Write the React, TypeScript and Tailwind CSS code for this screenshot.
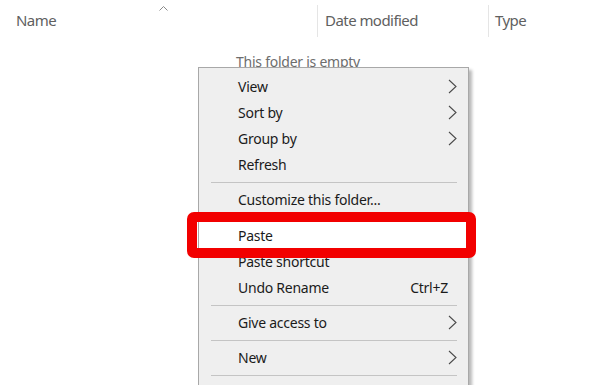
import React from 'react';

type MenuEntry =
  | { kind: 'item'; label: string; sub?: boolean; shortcut?: string; active?: boolean }
  | { kind: 'sep' };

const MENU: MenuEntry[] = [
  { kind: 'item', label: 'View', sub: true },
  { kind: 'item', label: 'Sort by', sub: true },
  { kind: 'item', label: 'Group by', sub: true },
  { kind: 'item', label: 'Refresh' },
  { kind: 'sep' },
  { kind: 'item', label: 'Customize this folder...' },
  { kind: 'sep' },
  { kind: 'item', label: 'Paste', active: true },
  { kind: 'item', label: 'Paste shortcut' },
  { kind: 'item', label: 'Undo Rename', shortcut: 'Ctrl+Z' },
  { kind: 'sep' },
  { kind: 'item', label: 'Give access to', sub: true },
  { kind: 'sep' },
  { kind: 'item', label: 'New', sub: true },
  { kind: 'sep' },
  // the next entry (Properties) is below the bottom edge of the window
  { kind: 'item', label: '' },
];

const Chevron = () => (
  <svg width="9" height="15" viewBox="0 0 9 15" className="shrink-0">
    <polyline points="1,1 8,7.5 1,14" fill="none" stroke="#4a4a4a" strokeWidth="1.1" />
  </svg>
);

const ContextMenu: React.FC = () => (
  <div className="absolute left-[198px] top-[67px] w-[271px] bg-[#efefef] border border-[#a8a8a8] shadow-[3px_3px_3px_rgba(0,0,0,0.28)] py-[5px]">
    {MENU.map((entry, i) =>
      entry.kind === 'sep' ? (
        <div key={i} className="h-px my-[4px] ml-[12px] mr-[11px] bg-[#c4c4c4]" />
      ) : (
        <div
          key={i}
          className={`h-[26.2px] flex items-center pl-[39px] pr-[11px] text-[14px] tracking-[-0.25px] text-[#1b1b1b] ${entry.active ? 'bg-white' : ''}`}
        >
          <span className="flex-1">{entry.label}</span>
          {entry.shortcut && <span className="mr-[9px]">{entry.shortcut}</span>}
          {entry.sub && <Chevron />}
        </div>
      )
    )}
  </div>
);

export default function App() {
  return (
    <div className="relative w-[600px] h-[385px] overflow-hidden bg-white font-['Noto_Sans',sans-serif]">
      <div className="flex h-[41px] items-center text-[15px] tracking-[-0.55px] text-[#606060]">
        <div className="relative w-[317px] h-full flex items-center pl-[16px]">
          <span>Name</span>
          <svg width="9" height="5" viewBox="0 0 9 5" className="absolute left-[159px] top-[6px]">
            <polyline points="0.5,4.5 4.5,0.5 8.5,4.5" fill="none" stroke="#8a8a8a" strokeWidth="1" />
          </svg>
        </div>
        <div className="w-[171px] h-[32px] border-l border-[#e5e5e5] flex items-center pl-[7px]">Date modified</div>
        <div className="flex-1 h-[32px] border-l border-[#e5e5e5] flex items-center pl-[6px]">Type</div>
      </div>
      <div className="pl-[236px] pt-[10px] text-[14px] tracking-[-0.25px] text-[#6d6d6d]">This folder is empty</div>
      <ContextMenu />
      <div className="absolute left-[187px] top-[212px] w-[289px] h-[46px] border-[10px] border-[#f20000] rounded-[7px]" />
    </div>
  );
}
